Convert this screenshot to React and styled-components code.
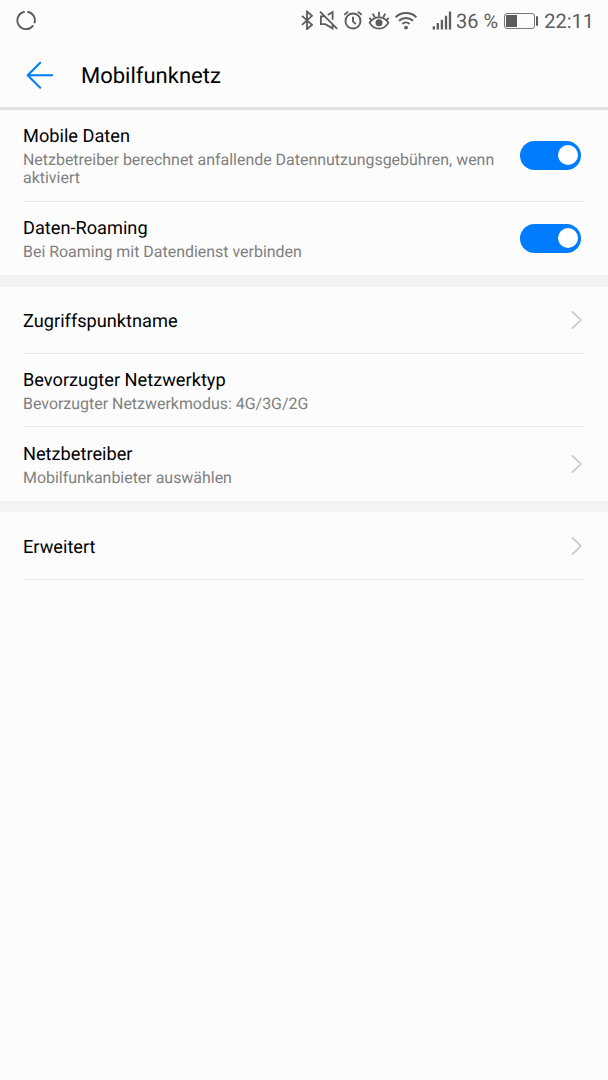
import React, { useState } from 'react';
import styled, { createGlobalStyle } from 'styled-components';

const colors = {
  background: '#fcfcfc',
  accent: '#007dff',
  text: '#000000',
  muted: '#808080',
  status: '#5c5c5c',
  divider: '#e8e8e8',
  gap: '#f3f3f3',
};

const sections = [
  {
    rows: [
      {
        title: 'Mobile Daten',
        text: 'Netzbetreiber berechnet anfallende Datennutzungsgebühren, wenn aktiviert',
        toggle: true,
        height: 92,
      },
      {
        title: 'Daten-Roaming',
        text: 'Bei Roaming mit Datendienst verbinden',
        toggle: true,
        height: 73,
      },
    ],
  },
  {
    gap: 12,
    rows: [
      { title: 'Zugriffspunktname', link: true, height: 67, offset: 4 },
      {
        title: 'Bevorzugter Netzwerktyp',
        text: 'Bevorzugter Netzwerkmodus: 4G/3G/2G',
        height: 73,
        offset: 1,
      },
      {
        title: 'Netzbetreiber',
        text: 'Mobilfunkanbieter auswählen',
        link: true,
        height: 74,
        offset: 1,
      },
    ],
  },
  {
    gap: 11,
    rows: [{ title: 'Erweitert', link: true, height: 68, offset: 4 }],
  },
];

const App = () => (
  <Screen>
    <GlobalStyle />
    <StatusBar />
    <Header>
      <BackButton aria-label="Zurück">
        <svg width="28" height="28" viewBox="0 0 28 28">
          <path d="M14.2 1.8 1.7 14.3l12.5 12.5M1.7 14.3h24.5" />
        </svg>
      </BackButton>
      <HeaderTitle>Mobilfunknetz</HeaderTitle>
    </Header>
    {sections.map(({ gap, rows }, i) => (
      <Section key={i} $gap={gap}>
        {rows.map((row, j) => (
          <SettingRow
            key={row.title}
            divider={j < rows.length - 1 || i === sections.length - 1}
            {...row}
          />
        ))}
      </Section>
    ))}
  </Screen>
);

const SettingRow = ({ title, text, toggle, link, height, offset, divider }) => {
  const [on, setOn] = useState(true);

  return (
    <Row $height={height} $divider={divider}>
      <RowBody $offset={offset}>
        <RowTitle>{title}</RowTitle>
        {text && <RowText>{text}</RowText>}
      </RowBody>
      {toggle && (
        <Toggle
          role="switch"
          aria-checked={on}
          aria-label={title}
          $on={on}
          onClick={() => setOn(!on)}
        >
          <Knob />
        </Toggle>
      )}
      {link && (
        <Chevron width="12" height="20" viewBox="0 0 12 20">
          <path d="M1 1.3l8.8 8.7L1 18.7" />
        </Chevron>
      )}
    </Row>
  );
};

const StatusBar = () => (
  <StatusWrapper>
    <StatusIcon width="20" height="20" viewBox="0 0 20 20">
      <path d="M11.4 1.8A8.7 8.7 0 0 1 18.4 13.2M17.2 15.4A8.7 8.7 0 1 1 8.8 1.8" />
    </StatusIcon>
    <StatusGroup>
      <StatusIcon width="12" height="20" viewBox="0 0 12 20" $stroke={1.8}>
        <path d="M1 5.8l10 9-5 4.3V1.5l5 4.3-10 9" />
      </StatusIcon>
      <StatusIcon width="20" height="20" viewBox="0 0 20 20" $left={6} $stroke={1.8}>
        <path d="M1 1.6l17.2 17.2M5.4 6.4H1.9v7.8h4.4l7.3 4.2v-4.6M8.8 5l4.8-3v7.7" />
      </StatusIcon>
      <StatusIcon width="20" height="20" viewBox="0 0 20 20" $left={4} $stroke={1.9}>
        <circle cx="10" cy="11" r="7.5" />
        <path d="M10 6.8v4.6l2.8 2.8M1.3 4.9l3.8-3.3M18.7 4.9l-3.8-3.3" />
      </StatusIcon>
      <StatusIcon width="22" height="20" viewBox="0 0 22 20" $left={5} $stroke={1.8}>
        <path d="M1.6 12.6C4 9.1 7 7.3 11 7.3s7 1.8 9.4 5.3c-2.4 4.2-5.4 6-9.4 6s-7-1.8-9.4-6z" />
        <path d="M11 1.7v5M4.8 3.6l2 3.9M17.2 3.6l-2 3.9M1.3 7.8l2.3 2.3M20.7 7.8l-2.3 2.3" />
        <circle cx="11" cy="12.8" r="3.5" className="solid" />
      </StatusIcon>
      <StatusIcon width="24" height="20" viewBox="0 0 24 20" $left={4} $stroke={2}>
        <path d="M1.6 7.2a15 15 0 0 1 20.8 0M5 10.8a10.2 10.2 0 0 1 14 0M8.4 14a5.2 5.2 0 0 1 7.2 0" />
        <circle cx="12" cy="17.6" r="1.9" className="solid" />
      </StatusIcon>
      <StatusIcon width="20" height="20" viewBox="0 0 20 20" $left={14} $stroke={2.3}>
        <path d="M1.8 19.5v-3.2M5.8 19.5v-6.4M9.9 19.5V9.8M14 19.5V5.8M18 19.5V1.4" />
      </StatusIcon>
      <StatusText $left={4}>36 %</StatusText>
      <Battery>
        <BatteryLevel />
      </Battery>
      <BatteryTip />
      <StatusText $left={6}>22:11</StatusText>
    </StatusGroup>
  </StatusWrapper>
);

const GlobalStyle = createGlobalStyle`
  * {
    box-sizing: border-box;
  }

  body {
    margin: 0;
    background: ${colors.background};
    font-family: Roboto, "Liberation Sans", sans-serif;
    text-rendering: geometricPrecision;
  }
`;

const Screen = styled.div`
  min-height: 1080px;
  background: ${colors.background};
  color: ${colors.text};
`;

const StatusWrapper = styled.div`
  height: 42px;
  padding: 0 14px 0 16px;
  display: flex;
  align-items: center;
  justify-content: space-between;
  color: ${colors.status};
`;

const StatusGroup = styled.div`
  display: flex;
  align-items: center;
`;

const StatusIcon = styled.svg`
  flex: none;
  margin-left: ${props => props.$left || 0}px;
  margin-bottom: 2px;
  fill: none;
  stroke: currentColor;
  stroke-width: ${props => props.$stroke || 1.9};

  .solid {
    fill: currentColor;
    stroke: none;
  }
`;

const StatusText = styled.span`
  margin-left: ${props => props.$left}px;
  font-size: 20px;
  line-height: 24px;
  white-space: nowrap;
`;

const Battery = styled.div`
  width: 31px;
  height: 16px;
  margin-left: 6px;
  padding: 1px;
  border: 1px solid #777777;
  border-radius: 3px;
`;

const BatteryLevel = styled.div`
  width: 11px;
  height: 12px;
  background: ${colors.status};
`;

const BatteryTip = styled.div`
  width: 2px;
  height: 10px;
  margin-left: 1px;
  border-radius: 1px;
  background: ${colors.status};
`;

const Header = styled.header`
  height: 68px;
  padding-left: 26px;
  display: flex;
  align-items: center;
  border-bottom: 3px solid #e1e1e1;
`;

const BackButton = styled.button`
  padding: 0;
  border: 0;
  background: none;
  display: flex;

  path {
    fill: none;
    stroke: ${colors.accent};
    stroke-width: 2;
    stroke-linecap: round;
    stroke-linejoin: round;
  }
`;

const HeaderTitle = styled.h1`
  margin: 5px 0 0 27px;
  font-size: 22px;
  font-weight: 400;
  line-height: 28px;
`;

const Section = styled.section`
  border-top: ${props => props.$gap || 0}px solid ${colors.gap};
`;

const Row = styled.div`
  height: ${props => props.$height}px;
  margin: 0 23px;
  padding-right: 4px;
  display: flex;
  align-items: center;
  justify-content: space-between;
  border-bottom: ${props => (props.$divider ? `1px solid ${colors.divider}` : '0')};
`;

const RowBody = styled.div`
  width: 480px;
  padding-top: ${props => props.$offset || 0}px;
`;

const RowTitle = styled.div`
  font-size: 18.2px;
  line-height: 24px;
`;

const RowText = styled.div`
  margin-top: 2px;
  font-size: 15.95px;
  line-height: 18px;
  color: ${colors.muted};
`;

const Toggle = styled.button`
  flex: none;
  width: 61px;
  height: 29px;
  margin-bottom: 1px;
  padding: 0 3px;
  border: 0;
  border-radius: 15px;
  display: flex;
  align-items: center;
  justify-content: ${props => (props.$on ? 'flex-end' : 'flex-start')};
  background: ${props => (props.$on ? colors.accent : '#d0d0d0')};
`;

const Knob = styled.span`
  width: 20px;
  height: 20px;
  border-radius: 50%;
  background: #ffffff;
`;

const Chevron = styled.svg`
  flex: none;
  margin-right: -2px;
  fill: none;
  stroke: #c8c8c8;
  stroke-width: 1.7;
`;

export default App;
